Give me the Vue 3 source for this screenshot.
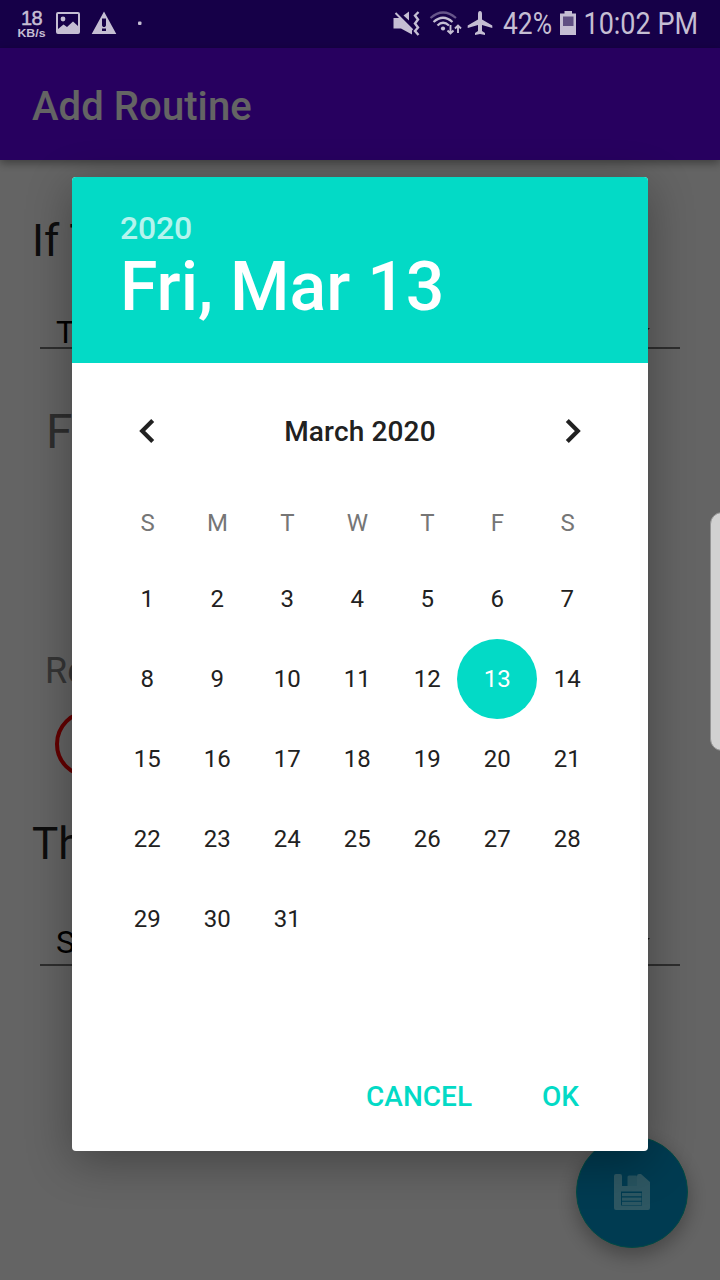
<script setup>
const weekdays = ['S', 'M', 'T', 'W', 'T', 'F', 'S']
const days = Array.from({ length: 31 }, (_, i) => i + 1)
const selected = 13
</script>

<template>
  <div class="screen">
    <div class="app">
      <div class="status-bg"></div>
      <header class="toolbar">Add Routine</header>
      <main class="form">
        <h2 class="section">If T</h2>
        <div class="spinner"><span>T</span><i class="caret"></i></div>
        <div class="date-field">F</div>
        <div class="repeat-label">Re</div>
        <div class="ring"></div>
        <h2 class="section then">Th</h2>
        <div class="spinner second"><span>S</span><i class="caret"></i></div>
      </main>
      <button class="fab" aria-label="Save">
        <svg width="36" height="36" viewBox="0 0 36 36">
          <path fill="#73d9f5" fill-rule="evenodd" d="M2 0H6Q8 0 8 2V12H23V2Q23 0 25 0H27L36 8V34Q36 36 34 36H2Q0 36 0 34V2Q0 0 2 0ZM7 17.5H28V31.5H7Z" />
          <path fill="#62cfee" d="M15 1.5H22Q23 1.5 23 2.5V12H13.5V3Q13.5 1.5 15 1.5Z" />
          <path stroke="#73d9f5" stroke-width="3.4" d="M8 20.6H27.5M8 25.1H27.5M8 29.4H27.5" />
        </svg>
      </button>
    </div>

    <div class="scrim"></div>

    <div class="status">
      <svg class="status-icons" width="720" height="48" viewBox="0 0 720 48" fill="#c5bed3">
        <g class="speed">
          <text x="21" y="24.7" font-size="20" textLength="21.5" stroke="#c5bed3" stroke-width=".5">18</text>
          <text x="17.5" y="36.5" font-size="11.5" font-weight="700" textLength="28" lengthAdjust="spacingAndGlyphs">KB/s</text>
        </g>
        <path fill-rule="evenodd" d="M58 12H78Q80 12 80 14V32Q80 34 78 34H58Q56 34 56 32V14Q56 12 58 12ZM58 14V29L63.5 24.5L67 27L73 21.5L78 26V14Z" />
        <circle cx="63" cy="19" r="2.4" />
        <path fill-rule="evenodd" d="M104 11.5L116.3 34H91.7ZM102 18.5V25.5L103 27H105L106 25.5V18.5ZM102 28.5V31H106V28.5Z" />
        <rect x="138" y="21.5" width="3.5" height="3.5" rx="1" />

        <path d="M393.5 18H400L404 22L412 30V34.5L401 28.5H393.5ZM403.5 15.5L409 11.5V20.5Z" />
        <path d="M395.5 13L412.5 30" stroke="#c5bed3" stroke-width="2" />
        <path d="M418.5 12L415 15.5L418 19.5L415 23.5L418 27.5L415 31L418.5 35" fill="none" stroke="#c5bed3" stroke-width="2.4" />
        <g fill="none" stroke="#c5bed3" stroke-width="2.2">
          <path stroke="#67558a" d="M430.5 18Q443 7 456 18" />
          <path d="M433.5 22Q443 13.5 452.5 22M437.5 25.5Q443 20 449 25.5" />
          <path stroke-width="1.9" d="M450.5 25V33M447.5 30.5L450.5 33.5L453.5 30.5M458 33V26M455 28.5L458 25.5L461 28.5" />
        </g>
        <circle cx="443" cy="28.5" r="2.1" />
        <path d="M480 11Q482 11 482 14V19.5L492.3 25.5V28L482 25V31L485 33V35L480 34L475 35V33L478 31V25L467.7 28V25.5L478 19.5V14Q478 11 480 11Z" />
        <path d="M564.5 11H572V13.5H576V35H560V13.5H564.5Z" />
        <rect x="563" y="16.5" width="10.5" height="9.5" fill="#605083" />
        <text x="503" y="34.3" font-size="31" textLength="49" lengthAdjust="spacingAndGlyphs">42%</text>
        <text x="583.5" y="34.3" font-size="31" textLength="114.5" lengthAdjust="spacingAndGlyphs">10:02 PM</text>
      </svg>
    </div>

    <section class="dialog">
      <header class="head">
        <div class="year">2020</div>
        <div class="date">Fri, Mar 13</div>
      </header>
      <div class="month">
        <svg width="16" height="26" viewBox="0 0 16 26"><path d="M13.7 2.5L3.2 13L13.7 23.5" /></svg>
        <span>March 2020</span>
        <svg width="16" height="26" viewBox="0 0 16 26"><path d="M2.3 2.5L12.8 13L2.3 23.5" /></svg>
      </div>
      <div class="grid weekdays">
        <span v-for="(d, i) in weekdays" :key="i">{{ d }}</span>
      </div>
      <div class="grid days">
        <span v-for="d in days" :key="d" :class="{ selected: d === selected }">{{ d }}</span>
      </div>
      <footer class="actions"><span>CANCEL</span><span>OK</span></footer>
    </section>

    <div class="edge-handle"></div>
  </div>
</template>

<style>
body { margin: 0; overflow: hidden; }
</style>

<style scoped>
.screen {
  position: relative;
  width: 720px;
  height: 1280px;
  overflow: hidden;
  font-family: Roboto, "Liberation Sans", sans-serif;
}
.app { height: 1280px; background: #fafafa; }
.status-bg { height: 48px; background: #3700b3; }
.toolbar {
  box-sizing: border-box;
  height: 112px;
  padding: 2px 32px 0;
  line-height: 114px;
  background: #6200ee;
  color: #fafafa;
  font-size: 40px;
  font-weight: 500;
  letter-spacing: .08px;
  box-shadow: 0 3px 9px rgba(0, 0, 0, .4);
}
.form { display: flow-root; }
.section {
  margin: 54px 0 0 32px;
  height: 52px;
  line-height: 54px;
  font-size: 44px;
  font-weight: 400;
  color: #212121;
}
.spinner {
  display: flex;
  justify-content: space-between;
  box-sizing: border-box;
  width: 640px;
  height: 37px;
  margin: 46px 0 0 40px;
  padding: 0 30px 0 16px;
  border-bottom: 2px solid #737373;
  font-size: 32px;
  line-height: 40px;
  color: #000;
}
.caret {
  width: 0;
  height: 0;
  margin-top: 16px;
  border: 10px solid transparent;
  border-top-color: #333;
  border-bottom: 0;
}
.date-field {
  margin: 53px 0 0 46px;
  height: 60px;
  line-height: 60px;
  font-size: 48px;
  color: #737373;
}
.repeat-label {
  margin: 189px 0 0 45px;
  height: 39px;
  line-height: 40px;
  font-size: 36px;
  color: #858585;
}
.ring {
  box-sizing: border-box;
  width: 68px;
  height: 68px;
  margin: 19.5px 0 0 55px;
  border: 4px solid #f80000;
  border-radius: 50%;
}
.then { margin-top: 39.5px; }
.second { height: 44px; margin-top: 53px; }
.fab {
  position: absolute;
  left: 576px;
  top: 1136px;
  display: grid;
  place-items: center;
  box-sizing: border-box;
  width: 112px;
  height: 112px;
  padding: 0;
  border: 1px solid #03b8a8;
  border-radius: 50%;
  background: #0095cb;
  box-shadow: 0 7px 20px rgba(0, 0, 0, .32);
}
.scrim { position: absolute; inset: 0; background: rgba(0, 0, 0, .6); }
.status {
  position: absolute;
  left: 0;
  top: 0;
  width: 720px;
  height: 48px;
}
.status-icons { display: block; font-family: Roboto, sans-serif; }
.speed { font-family: "Liberation Sans", sans-serif; }
.dialog {
  position: absolute;
  left: 72px;
  top: 177px;
  width: 576px;
  height: 974px;
  overflow: hidden;
  border-radius: 4px;
  background: #fff;
  box-shadow: 0 10px 46px rgba(0, 0, 0, .33);
  color: #212121;
}
.head {
  box-sizing: border-box;
  height: 186px;
  padding: 32px 48px 0;
  background: #03dac6;
  color: #fff;
  font-weight: 500;
}
.year { height: 38px; line-height: 38px; font-size: 32px; letter-spacing: -.2px; opacity: .7; }
.date { height: 80px; line-height: 81px; font-size: 68px; white-space: nowrap; }
.month {
  display: flex;
  align-items: center;
  justify-content: space-between;
  height: 136px;
  padding: 0 67px;
  font-size: 28px;
  font-weight: 500;
  letter-spacing: .15px;
}
.month svg { fill: none; stroke: #212121; stroke-width: 4.2; }
.grid {
  display: grid;
  grid-template-columns: repeat(7, 70px);
  margin-left: 40px;
  justify-items: center;
  text-align: center;
  font-size: 24px;
}
.weekdays { height: 60px; padding-left: .5px; line-height: 48px; color: #767676; }
.days { grid-auto-rows: 80px; height: 480px; line-height: 80px; }
.days span { box-sizing: border-box; width: 80px; height: 80px; margin: 0 -5px; padding-left: .5px; }
.days .selected { border-radius: 50%; background: #03dac6; color: #fff; }
.actions {
  display: flex;
  justify-content: flex-end;
  gap: 70px;
  padding-right: 69px;
  line-height: 115px;
  font-size: 28px;
  font-weight: 500;
  color: #03dac6;
}
.edge-handle {
  position: absolute;
  left: 710px;
  top: 512px;
  box-sizing: border-box;
  width: 24px;
  height: 239px;
  border: 1px solid #939393;
  border-radius: 12px;
  background: #d1d1d1;
}
</style>
